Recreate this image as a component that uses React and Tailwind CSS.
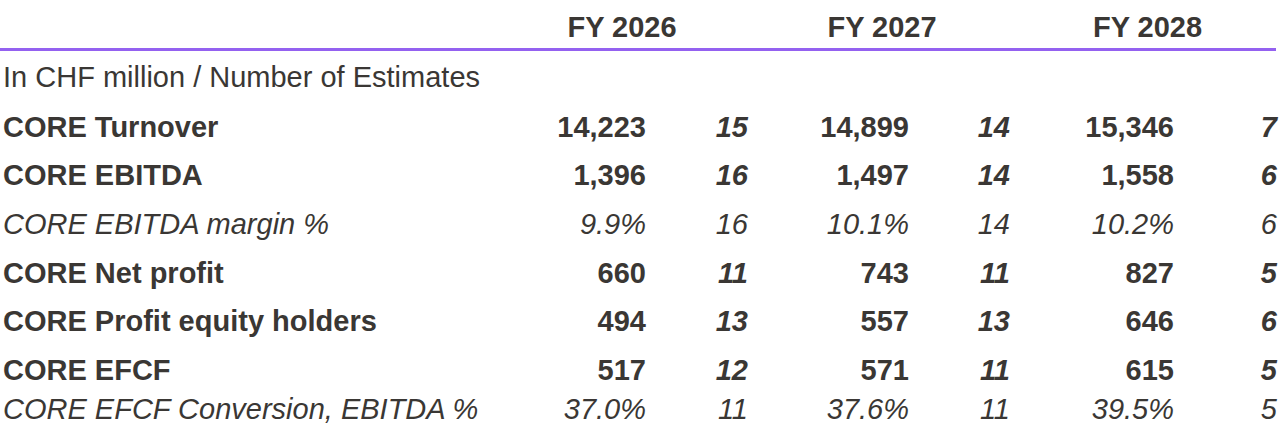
import React from "react";

const rows = [
  { label: "CORE Turnover", bold: true, v: ["14,223", "15", "14,899", "14", "15,346", "7"] },
  { label: "CORE EBITDA", bold: true, v: ["1,396", "16", "1,497", "14", "1,558", "6"] },
  { label: "CORE EBITDA margin %", bold: false, v: ["9.9%", "16", "10.1%", "14", "10.2%", "6"] },
  { label: "CORE Net profit", bold: true, v: ["660", "11", "743", "11", "827", "5"] },
  { label: "CORE Profit equity holders", bold: true, v: ["494", "13", "557", "13", "646", "6"] },
  { label: "CORE EFCF", bold: true, v: ["517", "12", "571", "11", "615", "5"] },
  { label: "CORE EFCF Conversion, EBITDA %", bold: false, v: ["37.0%", "11", "37.6%", "11", "39.5%", "5"] },
];

const grid = "grid grid-cols-[496px_150px_102px_161px_101px_164px_103px]";

function Row({ r, h }) {
  const base = r.bold ? "font-bold" : "font-normal italic";
  return (
    <div className={`${grid} ${h} items-center leading-none`}>
      <div className={`pl-[3px] whitespace-nowrap ${base}`}>{r.label}</div>
      {r.v.map((x, i) => (
        <div
          key={i}
          className={`text-right whitespace-nowrap ${r.bold ? "font-bold" : "font-normal"} ${
            i % 2 === 1 || !r.bold ? "italic" : ""
          }`}
        >
          {x}
        </div>
      ))}
    </div>
  );
}

export default function App() {
  return (
    <div
      className="w-[1280px] h-[447px] bg-white text-[#3a3734] text-[29px] overflow-hidden"
      style={{ fontFamily: '"Liberation Sans", Arial, sans-serif' }}
    >
      <div className={`${grid} h-[48px] items-center pt-[6px] leading-none font-bold`}>
        <div />
        <div className="col-span-2 text-center">FY 2026</div>
        <div className="col-span-2 text-center pl-[6px]">FY 2027</div>
        <div className="col-span-2 text-center pl-[8px]">FY 2028</div>
      </div>
      <div className="h-[3px] w-[1276px] bg-[#9461f0]" />
      <div className="h-[52px] flex items-center pl-[3px] leading-none">
        In CHF million / Number of Estimates
      </div>
      {rows.slice(0, 6).map((r) => (
        <Row key={r.label} r={r} h="h-[48.6px]" />
      ))}
      <Row r={rows[6]} h="h-[23px]" />
    </div>
  );
}
